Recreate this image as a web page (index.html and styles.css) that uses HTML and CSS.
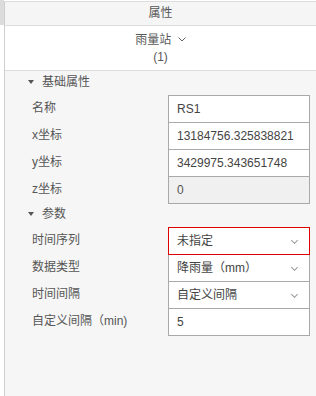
FILE: index.html
```html
<!DOCTYPE html>
<html lang="zh-CN">
<head>
  <meta charset="UTF-8">
  <title>属性</title>
  <link rel="stylesheet" href="styles.css">
</head>
<body>

<div class="page">
  <div class="gutter"><div class="tab"></div></div>

  <div class="panel">
    <div class="panel-title">属性</div>

    <div class="object-head">
      <div class="object-name">雨量站
        <svg class="chev" width="8" height="5" viewBox="0 0 8 5"><path d="M0.5 0.5 L4 4 L7.5 0.5" fill="none" stroke="#666" stroke-width="1"/></svg>
      </div>
      <div class="object-count">(1)</div>
    </div>

    <div class="panel-body">
      <div class="section"><span class="caret"></span>基础属性</div>
      <div class="group">
        <div class="prop"><div class="label">名称</div><div class="field">RS1</div></div>
        <div class="prop"><div class="label">x坐标</div><div class="field">13184756.325838821</div></div>
        <div class="prop"><div class="label">y坐标</div><div class="field">3429975.343651748</div></div>
        <div class="prop"><div class="label">z坐标</div><div class="field disabled">0</div></div>
      </div>

      <div class="section"><span class="caret"></span>参数</div>
      <div class="group">
        <div class="prop"><div class="label">时间序列</div><div class="field select focused">未指定<span class="arrow"></span></div></div>
        <div class="prop"><div class="label">数据类型</div><div class="field select">降雨量（mm）<span class="arrow"></span></div></div>
        <div class="prop"><div class="label">时间间隔</div><div class="field select">自定义间隔<span class="arrow"></span></div></div>
        <div class="prop"><div class="label">自定义间隔（min)</div><div class="field">5</div></div>
      </div>
    </div>
  </div>
</div>

</body>
</html>
```

FILE: styles.css
```css
body {
  margin: 0;
  font-family: "Liberation Sans", "Noto Sans CJK SC", sans-serif;
  font-size: 12px;
  color: #555;
  background: #fff;
}

.page {
  display: flex;
  height: 100vh;
}

.gutter {
  width: 4px;
  flex: none;
}

.gutter .tab {
  height: 25px;
  background: #dcdcdc;
}

.panel {
  flex: 1;
  display: flex;
  flex-direction: column;
  border-left: 1px solid #d0d0d0;
  margin-top: 1px;
  border-top: 1px solid #dcdcdc;
}

.panel-title {
  height: 23px;
  line-height: 23px;
  text-align: center;
  color: #555;
  background: #f5f5f5;
  border-bottom: 1px solid #dcdcdc;
}

.object-head {
  height: 44px;
  background: #fff;
  border-bottom: 1px solid #dcdcdc;
  text-align: center;
  color: #5a5a5a;
}

.object-name {
  padding-top: 6px;
  line-height: 17px;
}

.object-name .chev {
  margin-left: 3px;
  vertical-align: 2px;
}

.object-count {
  line-height: 17px;
}

.panel-body {
  flex: 1;
  background: #f6f6f6;
}

/* section header with small caret */
.section {
  height: 24px;
  line-height: 23px;
  padding-left: 23px;
  color: #555;
}

.caret {
  display: inline-block;
  width: 0;
  height: 0;
  border-left: 3px solid transparent;
  border-right: 3px solid transparent;
  border-top: 4px solid #555;
  margin-right: 8px;
  vertical-align: 2px;
}

.prop {
  display: flex;
  height: 27px;
}

.prop .label {
  width: 136px;
  padding-left: 27px;
  line-height: 27px;
  color: #555;
}

.prop .field {
  width: 132px;
  height: 26px;
  line-height: 26px;
  padding-left: 8px;
  border: 1px solid #a9a9a9;
  border-bottom: none;
  background: #fff;
  color: #444;
  position: relative;
}

.group .prop:last-child .field {
  border-bottom: 1px solid #a9a9a9;
}

.field.disabled {
  background: #f0f0f0;
  color: #555;
}

.field.focused {
  border-color: #e00000;
  box-shadow: 0 1px 0 #e00000;
  z-index: 1;
}

.field .arrow {
  position: absolute;
  right: 12px;
  top: 10px;
  width: 4px;
  height: 4px;
  border-right: 1px solid #999;
  border-bottom: 1px solid #999;
  transform: rotate(45deg);
}
```
